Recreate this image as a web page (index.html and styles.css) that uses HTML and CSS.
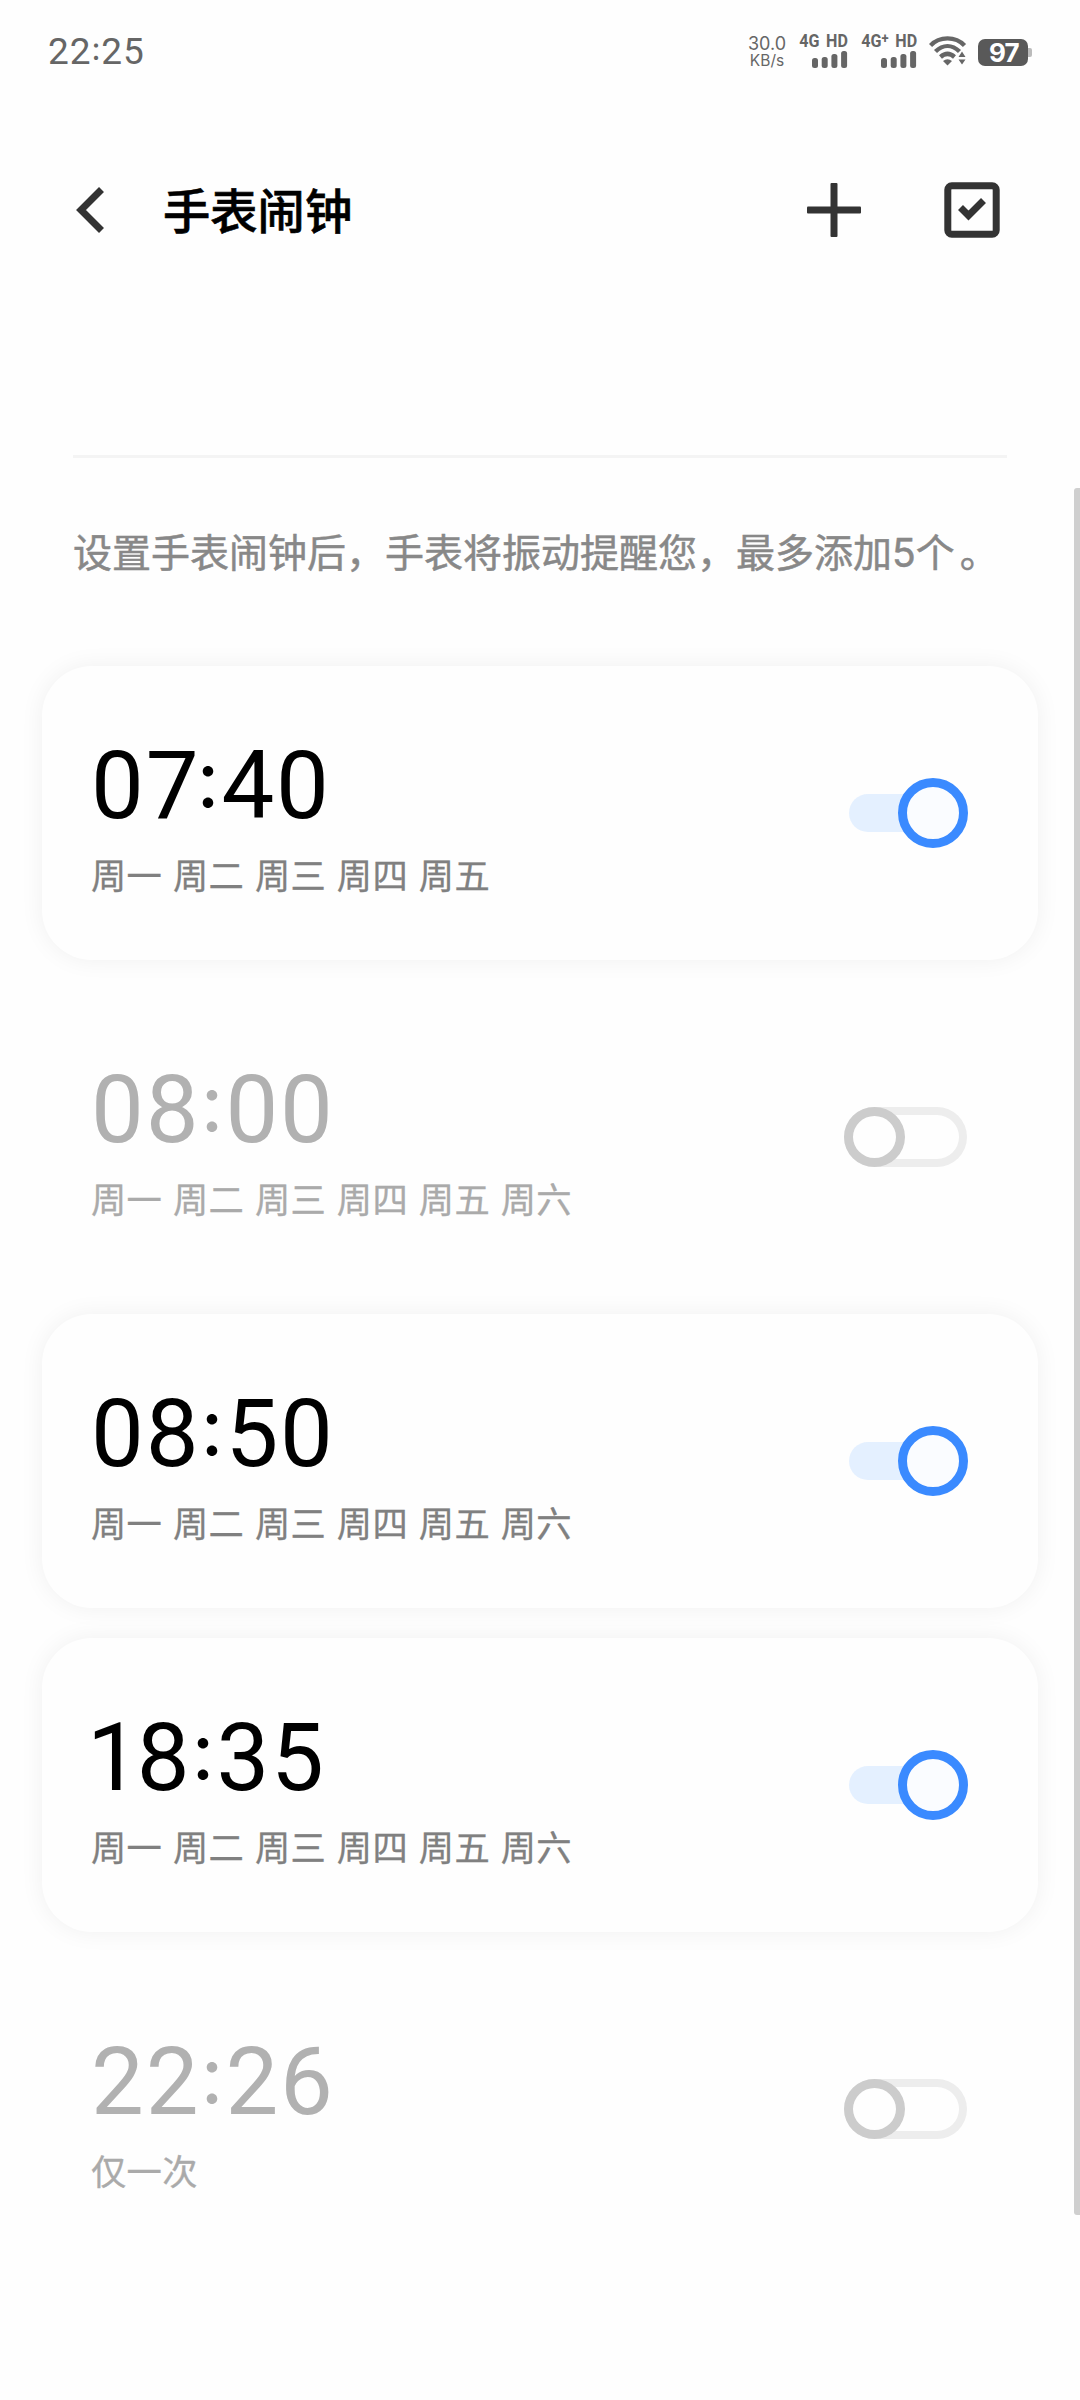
FILE: index.html
```html
<!DOCTYPE html>
<html lang="zh-CN">
<head>
  <meta charset="UTF-8">
  <meta name="viewport" content="width=device-width, initial-scale=1.0">
  <title>手表闹钟</title>
  <link rel="stylesheet" href="styles.css">
</head>
<body>
  <div class="status-bar">
    <div class="clock">22<span class="colon">:</span>25</div>
    <div class="status-icons">
      <div class="net-speed">
        <span class="speed-num">30.0</span>
        <span class="speed-unit">KB/s</span>
      </div>
      <div class="sim sim-1">
        <span class="sim-label">4G HD</span>
        <svg width="36" height="17" viewBox="0 0 36 17" fill="#666">
          <rect x="0" y="7" width="6" height="10" rx="2.5"/>
          <rect x="9.7" y="6" width="6" height="11" rx="2.5"/>
          <rect x="19.4" y="3" width="6" height="14" rx="2.5"/>
          <rect x="29.1" y="0" width="6" height="17" rx="2.5"/>
        </svg>
      </div>
      <div class="sim sim-2">
        <span class="sim-label">4G<sup>+</sup> HD</span>
        <svg width="36" height="17" viewBox="0 0 36 17" fill="#666">
          <rect x="0" y="7" width="6" height="10" rx="2.5"/>
          <rect x="9.7" y="6" width="6" height="11" rx="2.5"/>
          <rect x="19.4" y="3" width="6" height="14" rx="2.5"/>
          <rect x="29.1" y="0" width="6" height="17" rx="2.5"/>
        </svg>
      </div>
      <svg class="wifi" width="38" height="30" viewBox="0 0 38 30">
        <g fill="none" stroke="#666" stroke-width="4.4">
          <path d="M1.5 9.500C10.500 0 26.500 0 35.500 9.500"/>
          <path d="M6.500 15.500C14 8.300 23 8.300 30.500 15.500"/>
          <path d="M11.500 21C16 17 21 17 25.500 21"/>
        </g>
        <path d="M14 25Q18.500 21.500 23 25L18.500 29.500Z" fill="#666"/>
        <path d="M33 13l6 8v9h-7l-5-7z" fill="#fefefe"/>
        <path d="M33 15.500l3.500 5.500h-7zM33 28.500l3.500-5h-7z" fill="#666"/>
      </svg>
      <div class="battery">97</div>
    </div>
  </div>

  <div class="header">
    <svg class="back" width="30" height="48" viewBox="0 0 30 48">
      <path d="M26.500 3.500L6 24l20.500 20.500" fill="none" stroke="#333" stroke-width="7"/>
    </svg>
    <h1>手表闹钟</h1>
    <svg class="add" width="54" height="54" viewBox="0 0 54 54" fill="#333">
      <rect x="0" y="23.500" width="54" height="7" rx="1"/>
      <rect x="23.500" y="0" width="7" height="54" rx="1"/>
    </svg>
    <svg class="select" width="56" height="56" viewBox="0 0 56 56" fill="none" stroke="#333" stroke-width="7">
      <rect x="3.800" y="3.800" width="48.400" height="48.400" rx="4"/>
      <path d="M16.500 25.500l8 8 15-15"/>
    </svg>
  </div>

  <div class="tip">设置手表闹钟后，手表将振动提醒您，最多添加<span class="num">5</span>个<span class="stop">。</span></div>

  <div class="alarm-list">
    <div class="alarm on">
      <div class="info">
        <div class="time">0<span class="seven">7</span><span class="colon">:</span>40</div>
        <div class="days">周一 周二 周三 周四 周五</div>
      </div>
      <div class="switch"><div class="thumb"></div></div>
    </div>
    <div class="alarm">
      <div class="info">
        <div class="time">08<span class="colon">:</span>00</div>
        <div class="days">周一 周二 周三 周四 周五 周六</div>
      </div>
      <div class="switch"><div class="thumb"></div></div>
    </div>
    <div class="alarm on">
      <div class="info">
        <div class="time">08<span class="colon">:</span>50</div>
        <div class="days">周一 周二 周三 周四 周五 周六</div>
      </div>
      <div class="switch"><div class="thumb"></div></div>
    </div>
    <div class="alarm on">
      <div class="info">
        <div class="time"><span class="one">1</span>8<span class="colon">:</span>35</div>
        <div class="days">周一 周二 周三 周四 周五 周六</div>
      </div>
      <div class="switch"><div class="thumb"></div></div>
    </div>
    <div class="alarm">
      <div class="info">
        <div class="time">22<span class="colon">:</span>26</div>
        <div class="days">仅一次</div>
      </div>
      <div class="switch"><div class="thumb"></div></div>
    </div>
  </div>

  <div class="scrollbar"></div>
</body>
</html>
```

FILE: styles.css
```css
* {
  box-sizing: border-box;
}
body {
  position: relative;
  margin: 0;
  height: 2400px;
  overflow: hidden;
  background: #fefefe;
  font-family: Roboto, "Noto Sans CJK SC", sans-serif;
}
svg {
  display: block;
  flex: none;
}
.status-bar {
  display: flex;
  justify-content: space-between;
  height: 104px;
  padding: 0 48px;
  color: #666;
}
.clock {
  padding-top: 30px;
  font-size: 37px;
  line-height: 44px;
  letter-spacing: 0.9px;
}
/* 冒号与数字垂直居中 */
.colon {
  font-family: Inter, sans-serif;
  font-size: 0.85em;
  line-height: 0;
  vertical-align: 0.14em;
}
.status-icons {
  display: flex;
  align-items: flex-start;
}
.net-speed {
  display: flex;
  flex-direction: column;
  align-items: center;
  width: 40px;
  margin: 35px 13px 0 0;
  font-family: Inter, sans-serif;
  font-size: 15.5px;
  line-height: 17px;
}
.speed-num {
  font-size: 18px;
}
.sim {
  display: flex;
  flex-direction: column;
  align-items: flex-end;
  margin-top: 31px;
}
.sim-label {
  height: 19px;
  margin-bottom: 1px;
  font-size: 18.5px;
  font-weight: 700;
  line-height: 20px;
  word-spacing: 3px;
  white-space: nowrap;
  transform: scaleX(0.87);
  transform-origin: right;
}
.sim-label sup {
  font-size: 15px;
  line-height: 0;
  vertical-align: 4px;
}
.sim-1 {
  width: 48px;
  margin-right: 12px;
}
.sim-2 {
  width: 57px;
  margin-right: 12px;
}
.wifi {
  margin: 36px 11px 0 0;
}
.battery {
  position: relative;
  width: 50px;
  height: 27px;
  margin: 39px 4px 0 0;
  padding-left: 2px;
  border-radius: 7px;
  background: #595959;
  color: #fff;
  font: 700 26px/28px Inter, sans-serif;
  letter-spacing: -0.8px;
  text-align: center;
}
.battery::after {
  content: "";
  position: absolute;
  left: 50px;
  top: 9px;
  width: 4px;
  height: 9px;
  border-radius: 0 2px 2px 0;
  background: #bbb;
}
.header {
  display: flex;
  align-items: center;
  height: 212px;
  padding: 0 80px 0 75px;
}
.header h1 {
  flex: 1;
  margin: 0 0 0 58px;
  padding-top: 6px;
  color: #000;
  font-size: 47.3px;
  font-weight: 500;
  line-height: 60px;
  -webkit-text-stroke: 0.6px #000;
}
.select {
  margin-left: 83px;
}
.tip {
  margin: 139px 73px 0;
  padding-top: 65px;
  height: 211px;
  border-top: 3px solid #f4f4f4;
  color: #888;
  font-size: 39px;
  line-height: 60px;
  white-space: nowrap;
  -webkit-text-stroke: 0.5px #888;
}
.tip .num {
  font-family: Inter, sans-serif;
}
.tip .stop {
  margin-left: 5px;
}
.alarm-list {
  display: flex;
  flex-direction: column;
  gap: 30px;
  padding: 0 42px;
}
.alarm {
  display: flex;
  align-items: center;
  justify-content: space-between;
  height: 294px;
  padding: 5px 70px 5px 49px;
  border-radius: 50px;
}
.alarm.on {
  box-shadow: 0 0 24px rgba(0, 0, 0, 0.06);
}
.info {
  padding-top: 10px;
}
.time {
  height: 108px;
  color: #b1b1b1;
  font-size: 94px;
  line-height: 105px;
  letter-spacing: 1.9px;
}
.time .one {
  margin: 0 -5px 0 -4px;
}
.time .seven {
  margin-right: -4px;
}
.days {
  height: 52px;
  margin-top: 9px;
  color: #aaa;
  font-size: 35.3px;
  line-height: 52px;
  letter-spacing: 0.3px;
  word-spacing: 1.7px;
  -webkit-text-stroke: 0.3px;
}
.on .time {
  color: #000;
}
.on .days {
  color: #808080;
}
.switch {
  display: flex;
  width: 123px;
  height: 60px;
  margin-right: 1px;
  border-radius: 30px;
  box-shadow: inset 0 0 0 8px #ededed;
}
.thumb {
  width: 61px;
  height: 60px;
  border: 9px solid #ccc;
  border-radius: 50%;
  background: #fefefe;
}
.on .switch {
  align-items: center;
  justify-content: flex-end;
  width: 119px;
  height: 38px;
  margin-right: 0;
  background: linear-gradient(to right, #e4f0ff 80px, transparent 80px);
  box-shadow: none;
}
.on .thumb {
  flex: none;
  width: 70px;
  height: 70px;
  border-color: #3a8aff;
  background: #fafcff;
}
.scrollbar {
  position: absolute;
  top: 488px;
  right: 0;
  width: 6px;
  height: 1727px;
  border-radius: 3px 0 0 3px;
  background: #cfcfcf;
}
```
